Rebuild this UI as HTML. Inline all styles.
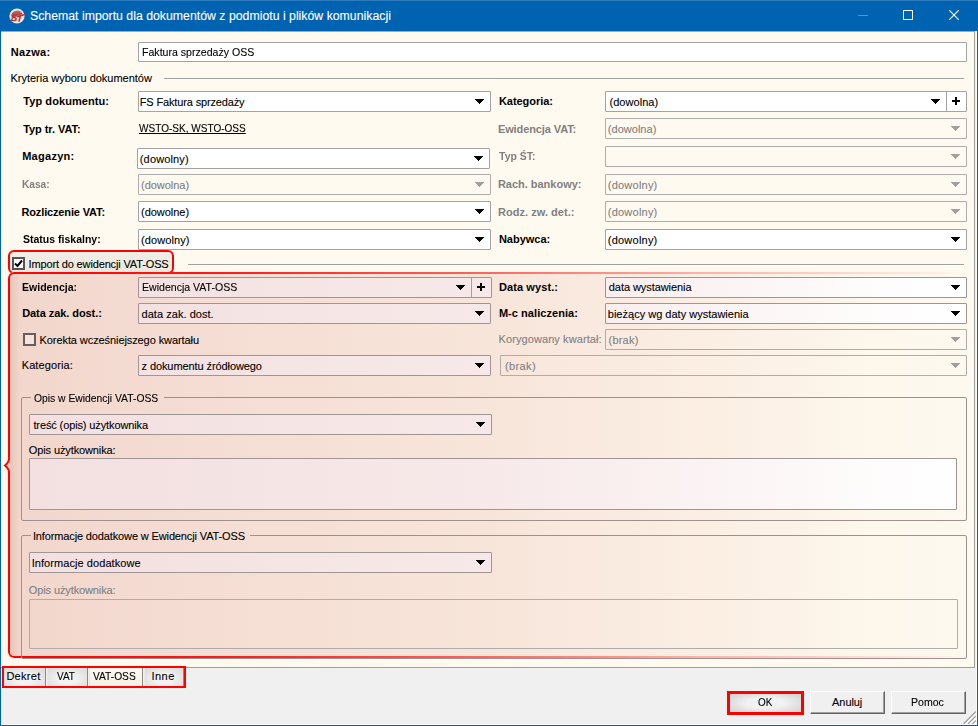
<!DOCTYPE html>
<html><head><meta charset="utf-8">
<style>
*{box-sizing:border-box;margin:0;padding:0}
html,body{width:978px;height:726px;overflow:hidden;background:#f0f0f0}
body{position:relative;font-family:"Liberation Sans",sans-serif;font-size:11px;color:#000}
.a{position:absolute}
.t{position:absolute;white-space:nowrap;line-height:13px;font-size:11px;-webkit-text-stroke:0.1px currentColor}
.b{font-weight:bold;-webkit-text-stroke:0}
.g{color:#808080}
.in{position:absolute;border:1px solid #a3a3a3;border-radius:1px;background:#fff}
.dis{background:transparent;border-color:#adadad}
.oss{background:linear-gradient(90deg,#f3dfdf 0px,#f5e4e4 250px,#f7e9e9 490px,#fbf3f3 700px,#fefcfc 880px,#fff 978px) fixed;border-color:#a09595}
.arr{position:absolute;width:0;height:0;border-left:4.5px solid transparent;border-right:4.5px solid transparent;border-top:5px solid #000}
.arr.gr{border-top-color:#a0a0a0}
.plus{position:absolute}
.plus:before{content:"";position:absolute;left:0;top:3px;width:8px;height:2px;background:#000}
.plus:after{content:"";position:absolute;left:3px;top:0;width:2px;height:8px;background:#000}
.grp{position:absolute;border:1px solid #9e9090;border-radius:2px}
.tab{position:absolute;top:668px;height:19px;background:radial-gradient(ellipse at 50% 60%,#f3f3f3 30%,#d9d9d9 100%);border-left:1px solid #e8e8e8;border-right:1px solid #8a8a8a;border-bottom:1px solid #8a8a8a}
.btn2{position:absolute}
.btn3{position:absolute;background:#f0f0f0;border-top:1px solid #fff;border-left:1px solid #fff;border-right:1px solid #646464;border-bottom:1px solid #646464;box-shadow:inset -1px -1px 0 #a0a0a0}
</style></head><body>

<div class="a" style="left:0;top:0;width:978px;height:31px;background:#0063b1"></div>
<div class="a" style="left:0;top:0;width:978px;height:1px;background:#2f7cbd"></div>
<div class="a" style="left:0;top:31px;width:1px;height:695px;background:#0063b1"></div>
<div class="a" style="left:977px;top:31px;width:1px;height:695px;background:#0063b1"></div>
<div class="a" style="left:0;top:725px;width:978px;height:1px;background:#0063b1"></div>
<div class="t" style="left:30px;top:9px;font-size:12.3px;line-height:14px;color:#fff">Schemat importu dla dokumentów z podmiotu i plików komunikacji</div>
<svg class="a" style="left:8px;top:7px" width="18" height="18" viewBox="0 0 18 18"><defs><linearGradient id="ig" x1="0" y1="0" x2="0" y2="1"><stop offset="0" stop-color="#c86a66"/><stop offset="1" stop-color="#9e2f2c"/></linearGradient></defs><circle cx="9" cy="9" r="7.6" fill="#ebe4e4"/><path d="M3.2 8.6 A6 6 0 0 1 14.6 7.2 L11 8.2 L4 10.6 Z" fill="url(#ig)"/><path d="M8.2 10 L4.5 10.6 L3.6 13.6 L7.8 13.4 L8.3 11.8 L6.6 11.9" stroke="#c0302c" stroke-width="1.4" fill="none" stroke-linejoin="round"/><path d="M8.6 9.7 L16.6 7.4 M12.4 8.8 L10.9 14.6" stroke="#c0302c" stroke-width="1.6" fill="none"/></svg>
<div class="a" style="left:858px;top:15px;width:10px;height:1px;background:#5a8fc8"></div>
<div class="a" style="left:903px;top:10px;width:10px;height:10px;border:1px solid #fff"></div>
<svg class="a" style="left:949px;top:10px" width="10" height="10" viewBox="0 0 10 10"><path d="M0 0L10 10M10 0L0 10" stroke="#fff" stroke-width="1.1"/></svg>
<div class="a" style="left:1px;top:31px;width:974px;height:637px;background:#fffaef;border-top:1px solid #aca697;border-right:1px solid #a0a0a0;border-bottom:1px solid #a0a0a0"></div>
<div class="a" style="left:1px;top:32px;width:973px;height:1px;background:#fffff6"></div>
<div class="a" style="left:1px;top:32px;width:1px;height:635px;background:#fffff8"></div>
<div class="t b" style="left:10.70px;top:46px;letter-spacing:0.320px;">Nazwa:</div>
<div class="in " style="left:138px;top:42px;width:829px;height:20px;"></div>
<div class="t " style="left:142.44px;top:46px;transform:scaleX(0.9621);transform-origin:0 0;">Faktura sprzedaży OSS</div>
<div class="t " style="left:10.50px;top:72px;letter-spacing:-0.020px;">Kryteria wyboru dokumentów</div>
<div class="a" style="left:164px;top:78px;width:800px;height:1px;background:#a0a0a0;box-shadow:0 1px 0 #fff"></div>
<div class="t b" style="left:23.20px;top:95px;letter-spacing:0.085px;">Typ dokumentu:</div>
<div class="in " style="left:138px;top:91px;width:353px;height:21px;"></div>
<div class="t " style="left:139.80px;top:96px;letter-spacing:-0.147px;">FS Faktura sprzedaży</div>
<svg class="a" style="left:475px;top:99px" width="9" height="5" shape-rendering="crispEdges"><path d="M0 0h9v1h-1v1h-1v1h-1v1h-1v1h-1v-1h-1v-1h-1v-1h-1v-1h-1z" fill="#000"/></svg>
<div class="t b" style="left:23.20px;top:123px;letter-spacing:-0.064px;">Typ tr. VAT:</div>
<div class="t " style="left:139.00px;top:122px;transform:scaleX(0.9128);transform-origin:0 0;text-decoration:underline">WSTO-SK, WSTO-OSS</div>
<div class="t b" style="left:22.20px;top:150px;letter-spacing:0.271px;">Magazyn:</div>
<div class="in " style="left:137px;top:148px;width:353px;height:21px;"></div>
<div class="t " style="left:139.80px;top:153px;letter-spacing:0.150px;">(dowolny)</div>
<svg class="a" style="left:474px;top:156px" width="9" height="5" shape-rendering="crispEdges"><path d="M0 0h9v1h-1v1h-1v1h-1v1h-1v1h-1v-1h-1v-1h-1v-1h-1v-1h-1z" fill="#000"/></svg>
<div class="t b g" style="left:21.58px;top:178px;transform:scaleX(0.9214);transform-origin:0 0;">Kasa:</div>
<div class="in dis" style="left:138px;top:174px;width:353px;height:21px;"></div>
<div class="t g" style="left:141.00px;top:179px;letter-spacing:-0.025px;">(dowolna)</div>
<svg class="a" style="left:475px;top:182px" width="9" height="5" shape-rendering="crispEdges"><path d="M0 0h9v1h-1v1h-1v1h-1v1h-1v1h-1v-1h-1v-1h-1v-1h-1v-1h-1z" fill="#a0a0a0"/></svg>
<div class="t b" style="left:21.50px;top:206px;letter-spacing:-0.147px;">Rozliczenie VAT:</div>
<div class="in " style="left:138px;top:201px;width:353px;height:21px;"></div>
<div class="t " style="left:141.00px;top:206px;letter-spacing:-0.025px;">(dowolne)</div>
<svg class="a" style="left:475px;top:209px" width="9" height="5" shape-rendering="crispEdges"><path d="M0 0h9v1h-1v1h-1v1h-1v1h-1v1h-1v-1h-1v-1h-1v-1h-1v-1h-1z" fill="#000"/></svg>
<div class="t b" style="left:22.50px;top:233px;transform:scaleX(0.9556);transform-origin:0 0;">Status fiskalny:</div>
<div class="in " style="left:138px;top:229px;width:353px;height:21px;"></div>
<div class="t " style="left:141.00px;top:234px;letter-spacing:0.100px;">(dowolny)</div>
<svg class="a" style="left:475px;top:237px" width="9" height="5" shape-rendering="crispEdges"><path d="M0 0h9v1h-1v1h-1v1h-1v1h-1v1h-1v-1h-1v-1h-1v-1h-1v-1h-1z" fill="#000"/></svg>
<div class="t b" style="left:498.90px;top:95px;letter-spacing:-0.033px;">Kategoria:</div>
<div class="in " style="left:605px;top:91px;width:362px;height:21px;"></div>
<div class="t " style="left:609.50px;top:96px;letter-spacing:0.037px;">(dowolna)</div>
<div class="a" style="left:946px;top:92px;width:1px;height:19px;background:#a3a3a3"></div>
<div class="plus" style="left:952px;top:97px"></div>
<svg class="a" style="left:931px;top:99px" width="9" height="5" shape-rendering="crispEdges"><path d="M0 0h9v1h-1v1h-1v1h-1v1h-1v1h-1v-1h-1v-1h-1v-1h-1v-1h-1z" fill="#000"/></svg>
<div class="t b g" style="left:497.90px;top:123px;letter-spacing:-0.100px;">Ewidencja VAT:</div>
<div class="in dis" style="left:605px;top:118px;width:362px;height:21px;"></div>
<div class="t g" style="left:607.80px;top:123px;letter-spacing:0.025px;">(dowolna)</div>
<svg class="a" style="left:951px;top:126px" width="9" height="5" shape-rendering="crispEdges"><path d="M0 0h9v1h-1v1h-1v1h-1v1h-1v1h-1v-1h-1v-1h-1v-1h-1v-1h-1z" fill="#a0a0a0"/></svg>
<div class="t b g" style="left:499.40px;top:150px;transform:scaleX(0.9553);transform-origin:0 0;">Typ ŚT:</div>
<div class="in dis" style="left:605px;top:146px;width:362px;height:21px;"></div>
<svg class="a" style="left:951px;top:154px" width="9" height="5" shape-rendering="crispEdges"><path d="M0 0h9v1h-1v1h-1v1h-1v1h-1v1h-1v-1h-1v-1h-1v-1h-1v-1h-1z" fill="#a0a0a0"/></svg>
<div class="t b g" style="left:497.90px;top:178px;letter-spacing:-0.015px;">Rach. bankowy:</div>
<div class="in dis" style="left:605px;top:174px;width:362px;height:21px;"></div>
<div class="t g" style="left:607.80px;top:179px;letter-spacing:0.225px;">(dowolny)</div>
<svg class="a" style="left:951px;top:182px" width="9" height="5" shape-rendering="crispEdges"><path d="M0 0h9v1h-1v1h-1v1h-1v1h-1v1h-1v-1h-1v-1h-1v-1h-1v-1h-1z" fill="#a0a0a0"/></svg>
<div class="t b g" style="left:497.90px;top:206px;letter-spacing:0.043px;">Rodz. zw. det.:</div>
<div class="in dis" style="left:605px;top:201px;width:362px;height:21px;"></div>
<div class="t g" style="left:607.80px;top:206px;letter-spacing:0.225px;">(dowolny)</div>
<svg class="a" style="left:951px;top:209px" width="9" height="5" shape-rendering="crispEdges"><path d="M0 0h9v1h-1v1h-1v1h-1v1h-1v1h-1v-1h-1v-1h-1v-1h-1v-1h-1z" fill="#a0a0a0"/></svg>
<div class="t b" style="left:498.90px;top:233px;letter-spacing:-0.014px;">Nabywca:</div>
<div class="in " style="left:605px;top:229px;width:362px;height:21px;"></div>
<div class="t " style="left:607.80px;top:234px;letter-spacing:0.225px;">(dowolny)</div>
<svg class="a" style="left:951px;top:237px" width="9" height="5" shape-rendering="crispEdges"><path d="M0 0h9v1h-1v1h-1v1h-1v1h-1v1h-1v-1h-1v-1h-1v-1h-1v-1h-1z" fill="#000"/></svg>
<div class="a" style="left:8px;top:250px;width:166px;height:24px;border:2px solid #f00;border-radius:6px;background:linear-gradient(#f1eee6,#ebe8df)"></div>
<div class="a" style="left:12px;top:257px;width:13px;height:13px;border:2px solid #555;background:#fff"></div>
<svg class="a" style="left:14px;top:259px" width="9" height="9" viewBox="0 0 9 9"><path d="M1 4.5L3.5 7L8 1.5" stroke="#000" stroke-width="2" fill="none"/></svg>
<div class="t " style="left:28.50px;top:258px;letter-spacing:-0.142px;">Import do ewidencji VAT-OSS</div>
<div class="a" style="left:188px;top:264px;width:776px;height:1px;background:#a0a0a0;box-shadow:0 1px 0 #fff"></div>
<div class="a" style="left:8px;top:272px;width:960px;height:386px;border-radius:6px;background:linear-gradient(90deg,#f2d6cc 0%,#f5ddd3 20%,#f8e5da 50%,#fbeee3 72%,#fdf7ec 90%,#fdf9ef 100%)"></div>
<div class="a" style="left:10px;top:274px;width:10px;height:382px;background:linear-gradient(90deg,rgba(160,100,80,0.14),rgba(160,100,80,0))"></div>
<div class="a" style="left:8px;top:272px;width:960px;height:386px;border:2px solid #f00;border-radius:6px;-webkit-mask-image:linear-gradient(90deg,#000 0%,rgba(0,0,0,0.9) 20%,rgba(0,0,0,0.55) 50%,rgba(0,0,0,0.25) 72%,rgba(0,0,0,0.06) 95%,rgba(0,0,0,0) 100%)"></div>
<div class="a" style="left:8px;top:459px;width:2px;height:13px;background:#ead2c9"></div>
<svg class="a" style="left:2px;top:452px" width="10" height="26" viewBox="0 0 10 26"><path d="M7 0 L7 7 Q7 10 3 13.5 Q7 17 7 20 L7 26" stroke="#f00" stroke-width="2" fill="#ead2c9"/></svg>
<div class="t b" style="left:22.24px;top:281px;transform:scaleX(0.9589);transform-origin:0 0;">Ewidencja:</div>
<div class="in oss" style="left:138px;top:277px;width:354px;height:21px;"></div>
<div class="t " style="left:142.34px;top:281px;transform:scaleX(0.9602);transform-origin:0 0;">Ewidencja VAT-OSS</div>
<div class="a" style="left:471px;top:278px;width:1px;height:19px;background:#a3a3a3"></div>
<div class="plus" style="left:477px;top:283px"></div>
<svg class="a" style="left:456px;top:285px" width="9" height="5" shape-rendering="crispEdges"><path d="M0 0h9v1h-1v1h-1v1h-1v1h-1v1h-1v-1h-1v-1h-1v-1h-1v-1h-1z" fill="#000"/></svg>
<div class="t b" style="left:498.90px;top:281px;letter-spacing:0.100px;">Data wyst.:</div>
<div class="in oss" style="left:605px;top:277px;width:362px;height:21px;"></div>
<div class="t " style="left:608.80px;top:281px;letter-spacing:-0.067px;">data wystawienia</div>
<svg class="a" style="left:951px;top:285px" width="9" height="5" shape-rendering="crispEdges"><path d="M0 0h9v1h-1v1h-1v1h-1v1h-1v1h-1v-1h-1v-1h-1v-1h-1v-1h-1z" fill="#000"/></svg>
<div class="t b" style="left:22.20px;top:307px;letter-spacing:-0.067px;">Data zak. dost.:</div>
<div class="in oss" style="left:138px;top:303px;width:353px;height:21px;"></div>
<div class="t " style="left:141.50px;top:308px;letter-spacing:0.043px;">data zak. dost.</div>
<svg class="a" style="left:475px;top:311px" width="9" height="5" shape-rendering="crispEdges"><path d="M0 0h9v1h-1v1h-1v1h-1v1h-1v1h-1v-1h-1v-1h-1v-1h-1v-1h-1z" fill="#000"/></svg>
<div class="t b" style="left:498.90px;top:307px;letter-spacing:0.050px;">M-c naliczenia:</div>
<div class="in oss" style="left:605px;top:303px;width:362px;height:21px;"></div>
<div class="t " style="left:607.80px;top:308px;letter-spacing:0.008px;">bieżący wg daty wystawienia</div>
<svg class="a" style="left:951px;top:311px" width="9" height="5" shape-rendering="crispEdges"><path d="M0 0h9v1h-1v1h-1v1h-1v1h-1v1h-1v-1h-1v-1h-1v-1h-1v-1h-1z" fill="#000"/></svg>
<div class="a" style="left:23px;top:333px;width:13px;height:13px;border:2px solid #6b5d5d;background:rgba(255,255,255,0.3)"></div>
<div class="t " style="left:39.60px;top:334px;letter-spacing:-0.087px;">Korekta wcześniejszego kwartału</div>
<div class="t g" style="left:498.60px;top:333px;letter-spacing:0.083px;">Korygowany kwartał:</div>
<div class="in dis" style="left:605px;top:329px;width:362px;height:21px;"></div>
<div class="t g" style="left:608.50px;top:334px;letter-spacing:0.220px;">(brak)</div>
<svg class="a" style="left:951px;top:337px" width="9" height="5" shape-rendering="crispEdges"><path d="M0 0h9v1h-1v1h-1v1h-1v1h-1v1h-1v-1h-1v-1h-1v-1h-1v-1h-1z" fill="#a0a0a0"/></svg>
<div class="t " style="left:21.70px;top:359px;letter-spacing:0.111px;">Kategoria:</div>
<div class="in oss" style="left:138px;top:355px;width:353px;height:21px;"></div>
<div class="t " style="left:141.50px;top:360px;letter-spacing:-0.086px;">z dokumentu źródłowego</div>
<svg class="a" style="left:475px;top:363px" width="9" height="5" shape-rendering="crispEdges"><path d="M0 0h9v1h-1v1h-1v1h-1v1h-1v1h-1v-1h-1v-1h-1v-1h-1v-1h-1z" fill="#000"/></svg>
<div class="in dis" style="left:500px;top:355px;width:467px;height:21px;"></div>
<div class="t g" style="left:505.00px;top:360px;letter-spacing:0.380px;">(brak)</div>
<svg class="a" style="left:951px;top:363px" width="9" height="5" shape-rendering="crispEdges"><path d="M0 0h9v1h-1v1h-1v1h-1v1h-1v1h-1v-1h-1v-1h-1v-1h-1v-1h-1z" fill="#a0a0a0"/></svg>
<div class="grp" style="left:21px;top:397px;width:946px;height:124px;clip-path:polygon(0 0,10px 0,10px 2px,143px 2px,143px 0,100% 0,100% 100%,0 100%)"></div>
<div class="t " style="left:33.90px;top:392px;transform:scaleX(0.9394);transform-origin:0 0;">Opis w Ewidencji VAT-OSS</div>
<div class="in oss" style="left:29px;top:414px;width:463px;height:21px;"></div>
<div class="t " style="left:33.40px;top:419px;letter-spacing:-0.117px;">treść (opis) użytkownika</div>
<svg class="a" style="left:476px;top:422px" width="9" height="5" shape-rendering="crispEdges"><path d="M0 0h9v1h-1v1h-1v1h-1v1h-1v1h-1v-1h-1v-1h-1v-1h-1v-1h-1z" fill="#000"/></svg>
<div class="t " style="left:28.80px;top:444px;letter-spacing:-0.112px;">Opis użytkownika:</div>
<div class="in oss" style="left:29px;top:458px;width:928px;height:52px;"></div>
<div class="grp" style="left:21px;top:535px;width:946px;height:124px;clip-path:polygon(0 0,10px 0,10px 2px,229px 2px,229px 0,100% 0,100% 100%,0 100%)"></div>
<div class="t " style="left:32.90px;top:530px;letter-spacing:-0.131px;">Informacje dodatkowe w Ewidencji VAT-OSS</div>
<div class="in oss" style="left:29px;top:552px;width:463px;height:21px;"></div>
<div class="t " style="left:31.70px;top:557px;letter-spacing:0.068px;">Informacje dodatkowe</div>
<svg class="a" style="left:476px;top:560px" width="9" height="5" shape-rendering="crispEdges"><path d="M0 0h9v1h-1v1h-1v1h-1v1h-1v1h-1v-1h-1v-1h-1v-1h-1v-1h-1z" fill="#000"/></svg>
<div class="t g" style="left:28.80px;top:584px;letter-spacing:-0.112px;">Opis użytkownika:</div>
<div class="in dis" style="left:29px;top:599px;width:929px;height:50px;"></div>
<div class="tab" style="left:3px;width:43px"></div>
<div class="tab" style="left:47px;width:41px"></div>
<div class="tab" style="left:89px;width:54px;background:linear-gradient(#fdf9ef,#f6f1e6)"></div>
<div class="tab" style="left:144px;width:40px"></div>
<div class="t " style="left:6.40px;top:670px;letter-spacing:0.280px;">Dekret</div>
<div class="t " style="left:56.70px;top:670px;transform:scaleX(0.9050);transform-origin:0 0;">VAT</div>
<div class="t " style="left:93.30px;top:670px;transform:scaleX(0.9283);transform-origin:0 0;">VAT-OSS</div>
<div class="t " style="left:151.50px;top:670px;letter-spacing:0.467px;">Inne</div>
<div class="a" style="left:2px;top:666px;width:184px;height:22px;border:2px solid #f00"></div>
<div class="btn2" style="left:728px;top:692px;width:75px;height:22px;background:radial-gradient(ellipse at center,#f2f2f2 35%,#cdcdcd 100%);border:1px solid #8c8c8c"></div>
<div class="a" style="left:727px;top:691px;width:77px;height:24px;border:3px solid #f00"></div>
<div class="btn3" style="left:810px;top:691px;width:75px;height:23px"></div>
<div class="btn3" style="left:891px;top:691px;width:75px;height:23px"></div>
<div class="t " style="left:758.30px;top:696px;transform:scaleX(0.9000);transform-origin:0 0;">OK</div>
<div class="t " style="left:832.10px;top:696px;letter-spacing:-0.080px;">Anuluj</div>
<div class="t " style="left:911.04px;top:696px;transform:scaleX(0.9606);transform-origin:0 0;">Pomoc</div>
<svg class="a" style="left:962px;top:710px" width="15" height="15" viewBox="0 0 15 15"><g stroke-width="1.3" stroke-linecap="round"><path d="M13.5 2L2 13.5M13.5 6.5L6.5 13.5M13.5 11L11 13.5" stroke="#9a9a9a"/><path d="M14 3.5L3.5 14M14 8L8 14M14 12.5L12.5 14" stroke="#fff"/></g></svg>
<div class="a" style="left:976px;top:31px;width:1px;height:694px;background:#fffcf6"></div>
<div class="a" style="left:1px;top:724px;width:976px;height:1px;background:#fffcf6"></div>
</body></html>
